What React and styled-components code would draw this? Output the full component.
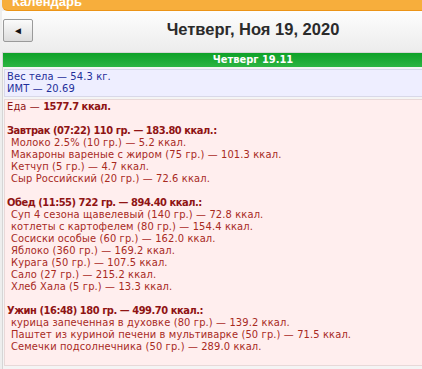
import React from 'react'
import styled, { createGlobalStyle } from 'styled-components';

const GlobalStyle = createGlobalStyle`
  body {
    margin: 0;
    background: #eeeeee;
    overflow: hidden;
    font-family: "DejaVu Sans Condensed", "DejaVu Sans", sans-serif;
  }
`

const Page = styled.div`
  width: 502px;
  margin-left: 2px;
`
const TopBar = styled.div`
  height: 10px;
  background: #f7ae3c;
  border-bottom: 1px solid #ec9417;
  border-bottom-left-radius: 6px;
  color: #fff;
  font: bold 13px "Liberation Sans", Arial, sans-serif;
  line-height: 4px;
  padding-left: 10px;
  overflow: hidden;
`
const Header = styled.div`
  height: 41px;
  display: flex;
  align-items: center;
  position: relative;
  background: linear-gradient(#fdfdfd, #ececec);
`
const BackButton = styled.button`
  position: absolute;
  left: 1px;
  top: 8px;
  width: 30px;
  height: 23px;
  border: 1px solid #9a9a9a;
  border-radius: 2px;
  background: linear-gradient(#fbfbfb, #dcdcdc);
  font-size: 10px;
  color: #111;
  padding: 0;
`
const Title = styled.h1`
  flex: 1;
  margin: 0 0 4px;
  text-align: center;
  font: bold 16.5px "Liberation Sans", Arial, sans-serif;
  color: #2b2b2b;
`
const Box = styled.div`
  border: 1px solid #d6d6d6;
  background: #f4f4f4;
  padding: 0 2px 3px 1px;
`
const DayBar = styled.div`
  height: 14px;
  line-height: 14px;
  background: linear-gradient(#0ea128, #2cb542);
  color: #fff;
  text-align: center;
  font: bold 11px "DejaVu Sans Condensed", "DejaVu Sans", sans-serif;
  margin: 0 -2px 2px -1px;
`
const Panel = styled.div`
  background: ${p => p.$bg};
  border: 1px solid ${p => p.$border};
  color: ${p => p.$color};
  font-size: 11px;
  letter-spacing: 0.13px;
  line-height: 12px;
  padding: 1px 2px ${p => p.$pb || 1}px;
  margin-bottom: 2px;
  white-space: nowrap;
`
const Strong = styled.div`
  font-weight: bold;
  letter-spacing: -0.45px;
  color: #8f1414;
`
const Num = styled.b`
  letter-spacing: -0.45px;
`
const Line = styled.div`
  color: #8f1414;
`
const Item = styled.div`
  padding-left: 4px;
  color: #a82a1e;
`
const Gap = styled.div`
  height: 12px;
`

const meals = [
  {
    title: 'Завтрак (07:22) 110 гр. — 183.80 ккал.:',
    items: [
      'Молоко 2.5% (10 гр.) — 5.2 ккал.',
      'Макароны вареные с жиром (75 гр.) — 101.3 ккал.',
      'Кетчуп (5 гр.) — 4.7 ккал.',
      'Сыр Российский (20 гр.) — 72.6 ккал.',
    ],
  },
  {
    title: 'Обед (11:55) 722 гр. — 894.40 ккал.:',
    items: [
      'Суп 4 сезона щавелевый (140 гр.) — 72.8 ккал.',
      'котлеты с картофелем (80 гр.) — 154.4 ккал.',
      'Сосиски особые (60 гр.) — 162.0 ккал.',
      'Яблоко (360 гр.) — 169.2 ккал.',
      'Курага (50 гр.) — 107.5 ккал.',
      'Сало (27 гр.) — 215.2 ккал.',
      'Хлеб Хала (5 гр.) — 13.3 ккал.',
    ],
  },
  {
    title: 'Ужин (16:48) 180 гр. — 499.70 ккал.:',
    items: [
      'курица запеченная в духовке (80 гр.) — 139.2 ккал.',
      'Паштет из куриной печени в мультиварке (50 гр.) — 71.5 ккал.',
      'Семечки подсолнечника (50 гр.) — 289.0 ккал.',
    ],
  },
]

const App = () => {
  return (
    <>
      <GlobalStyle />
      <Page>
        <TopBar>Календарь</TopBar>
        <Header>
          <BackButton>◄</BackButton>
          <Title>Четверг, Ноя 19, 2020</Title>
        </Header>
        <Box>
          <DayBar>Четверг 19.11</DayBar>
          <Panel $bg="#eeeeff" $border="#d8d8e8" $color="#1f2f9a">
            <div>Вес тела — 54.3 кг.</div>
            <div>ИМТ — 20.69</div>
          </Panel>
          <Panel $bg="#ffeeee" $border="#e8d8d8" $color="#8f1414" $pb={12}>
            <Line>Еда — <Num>1577.7 ккал.</Num></Line>
            {meals.map((m) => (
              <React.Fragment key={m.title}>
                <Gap />
                <Strong>{m.title}</Strong>
                {m.items.map((it) => <Item key={it}>{it}</Item>)}
              </React.Fragment>
            ))}
          </Panel>
        </Box>
      </Page>
    </>
  )
}

export default App;
